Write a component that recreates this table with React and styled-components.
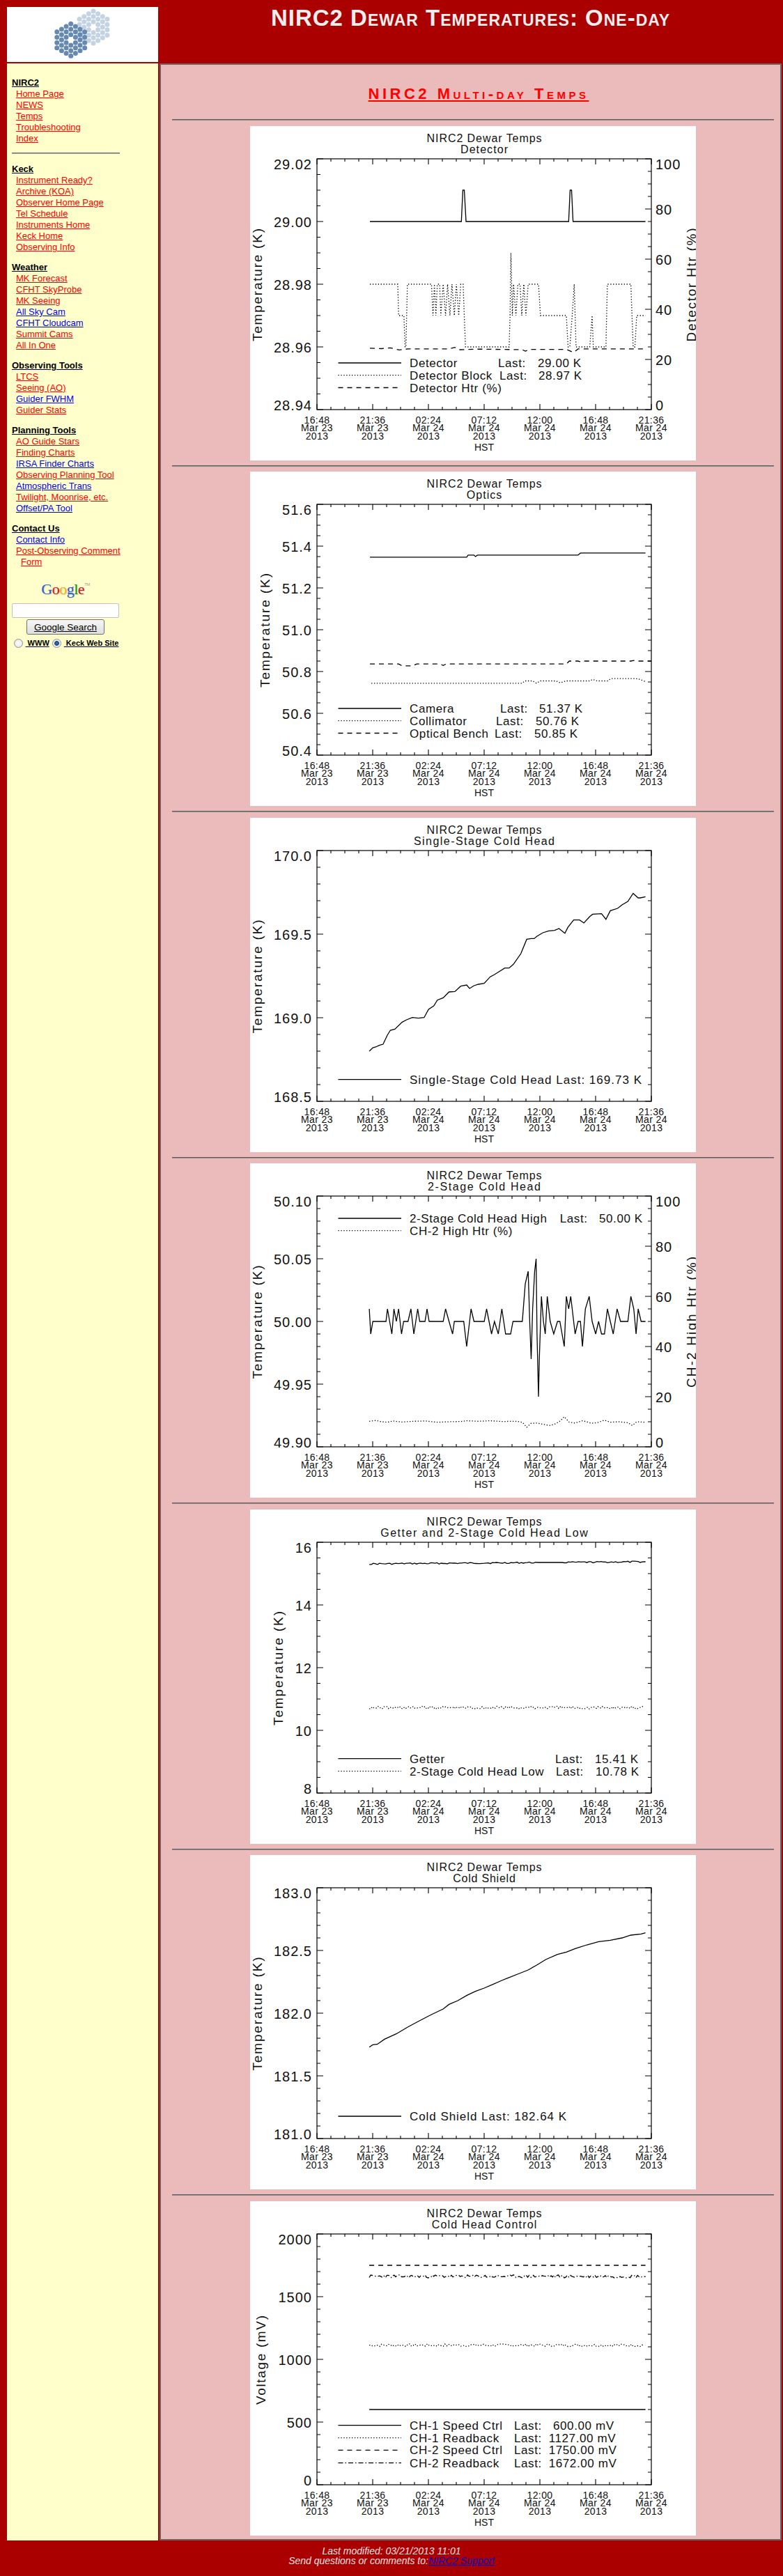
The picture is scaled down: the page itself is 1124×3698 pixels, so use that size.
import React from "react";
import styled, { createGlobalStyle } from "styled-components";

const GlobalStyle = createGlobalStyle`
  html, body { margin: 0; padding: 0; }
  body {
    background: #aa0000;
    font-family: "Liberation Sans", Arial, sans-serif;
  }
`;

const Page = styled.div`
  display: grid;
  grid-template-columns: 217px 893px;
  column-gap: 2px;
  row-gap: 2px;
  padding: 10px 0 0 10px;
`;

const LogoCell = styled.div`
  height: 79px;
  background: #ffffff;
  svg { display: block; }
`;

const TitleCell = styled.h1`
  margin: -3px 0 0;
  text-align: center;
  color: #eeeeee;
  font-size: 33px;
  line-height: 38px;
  font-weight: bold;
  font-variant: small-caps;
  letter-spacing: 1px;
`;

const Sidebar = styled.nav`
  background: #ffffcc;
  padding: 20px 3px 0 7px;
  font-size: 13px;
  line-height: 16px;
`;

const Group = styled.div`
  margin-top: ${(p) => p.$gap}px;
`;

const GroupHead = styled.a`
  display: block;
  color: #000000;
  font-weight: bold;
  text-decoration: underline;
`;

const NavLink = styled.a`
  display: block;
  padding-left: 13px;
  text-indent: -7px;
  color: ${(p) => (p.$blue ? "#0000ff" : "#ff0000")};
  text-decoration: underline;
`;

const SideRule = styled.div`
  width: 75%;
  height: 0;
  border-top: 1px solid #6e6e6e;
  border-bottom: 1px solid #a8a8a8;
  margin: 12px 0 14px;
`;

const SearchBox = styled.form`
  width: 154px;
  margin-top: 11px;
  display: flex;
  flex-direction: column;
  align-items: center;
`;

const GoogleMark = styled.div`
  font-family: "Liberation Serif", "Times New Roman", serif;
  font-size: 22px;
  line-height: 26px;
  letter-spacing: -0.5px;
  text-shadow: 1px 1px 1px rgba(0, 0, 0, 0.18);
  sup {
    font-family: "Liberation Sans", Arial, sans-serif;
    font-size: 6px;
    color: #999;
    vertical-align: 12px;
    text-shadow: none;
  }
`;

const Letter = styled.span`
  color: ${(p) => p.$c};
`;

const SearchInput = styled.input`
  box-sizing: border-box;
  width: 154px;
  height: 21px;
  margin: 7px 0 0;
  border: 1px solid #c2c2c2;
  border-radius: 2px;
  background: #ffffff;
`;

const SearchButton = styled.button`
  box-sizing: border-box;
  width: 112px;
  height: 22px;
  margin-top: 2px;
  padding: 0;
  border: 1px solid #707070;
  border-radius: 3px;
  background: linear-gradient(#f7f7f7, #dedede);
  font-family: "Liberation Sans", Arial, sans-serif;
  font-size: 13.5px;
  color: #000;
  text-decoration: underline;
`;

const RadioRow = styled.div`
  display: flex;
  align-items: center;
  height: 16px;
  margin-top: 4px;
  margin-left: 6px;
`;

const Radio = styled.input`
  appearance: none;
  margin: 0;
  width: 13px;
  height: 13px;
  border-radius: 50%;
  border: 1px solid #8f8f8f;
  background: radial-gradient(circle, #ffffff 0, #dedede 100%);
  &:checked {
    background: radial-gradient(circle, #3b74b8 0, #1a4a86 3px, #e8e8e8 3.8px, #ffffff 100%);
  }
`;

const RadioLabel = styled.span`
  margin: 0 4px 0 4px;
  font-size: 11px;
  font-weight: bold;
  white-space: pre;
  text-decoration: underline;
  color: #000;
`;

const Main = styled.main`
  background: #ebbaba;
  border: 2px solid #666666;
  padding: 0 9px 5.5px 16px;
`;

const Heading = styled.h2`
  margin: 29px 0 0;
  padding-left: 16px;
  text-align: center;
  font-size: 22px;
  line-height: 25px;
  font-weight: bold;
  font-variant: small-caps;
  letter-spacing: 4.5px;
  a {
    color: #ff0000;
    text-decoration: underline;
  }
`;

const Rule = styled.div`
  height: 0;
  border-top: 1px solid #5e5e5e;
  border-bottom: 1px solid #8c8c8c;
  margin: ${(p) => (p.$first ? 24 : 7)}px 0 7.5px;
`;

const ChartFrame = styled.div`
  width: 640px;
  height: 480px;
  margin: 0 auto;
  background: #ffffff;
  svg { display: block; }
`;

const ChartText = styled.text`
  font-family: "Liberation Sans", Arial, sans-serif;
  font-size: ${(p) => p.$size}px;
  letter-spacing: ${(p) => p.$ls || 0}px;
  fill: #111111;
`;

const Footer = styled.footer`
  padding: 8px 0 15px;
  text-align: center;
  color: #f4e2e2;
  font-style: italic;
  font-size: 14px;
  line-height: 14px;
  a { color: #0000cc; }
`;

/* ---------- logo ---------- */

function KeckLogo() {
  const s = 4.43;
  const cells = [];
  for (let q = -3; q <= 3; q++) {
    for (let r = -3; r <= 3; r++) {
      const d = Math.max(Math.abs(q), Math.abs(r), Math.abs(q + r));
      if (d === 0 || d > 3) continue;
      cells.push([1.5 * s * q, Math.sqrt(3) * s * (r + q / 2)]);
    }
  }
  return (
    <svg width="217" height="79" viewBox="0 0 217 79">
      {cells.map(([x, y], i) => (
        <circle key={"l" + i} cx={124 + x} cy={29 + y} r="3.5" fill="#c4d3e4" />
      ))}
      {cells.map(([x, y], i) => (
        <circle key={"d" + i} cx={91.7 + x} cy={47.3 + y} r="3.5" fill="#6689b2" />
      ))}
    </svg>
  );
}

/* ---------- plots ---------- */

const X0 = 96;
const X1 = 576;
const Y0 = 47;
const Y1 = 407;
const cx = (z) => z / 2.376 - 9;
const scale = (ax) => (v) => Y1 - ((v - ax.min) / (ax.max - ax.min)) * (Y1 - Y0);
const DASH = { solid: undefined, dot: "1.3 2.6", dash: "7 6", dashdot: "7 3 1.5 3" };

const XLABELS = [
  ["16:48", "Mar 23"],
  ["21:36", "Mar 23"],
  ["02:24", "Mar 24"],
  ["07:12", "Mar 24"],
  ["12:00", "Mar 24"],
  ["16:48", "Mar 24"],
  ["21:36", "Mar 24"],
];

function yTicks(ax) {
  const s = scale(ax);
  const n = Math.round((ax.max - ax.min) / ax.step);
  const major = [];
  const minor = [];
  for (let i = 0; i <= n; i++) {
    const v = ax.min + i * ax.step;
    major.push({ v, y: s(v) });
    if (i < n) {
      for (let j = 1; j < ax.minor; j++) minor.push(s(v + (j * ax.step) / ax.minor));
    }
  }
  return { major, minor };
}

const labelBase = (y) => Math.min(Math.max(y + 1, Y0 + 7.5), Y1 - 6.5) + 7;

function Plot({ sub, subW, left, right, ytitle, tx, tw, rtitle, rw, series, legend, yoff = 0 }) {
  const ls = scale(left);
  const rs = right ? scale(right) : null;
  const lt = yTicks(left);
  const rt = right ? yTicks(right) : lt;

  let ticks = "";
  for (let k = 0; k <= 24; k++) {
    const x = X0 + k * 20;
    const len = k % 4 === 0 ? 8 : 4;
    ticks += `M${x} ${Y1}v${-len}M${x} ${Y0}v${len}`;
  }
  lt.major.forEach((t) => (ticks += `M${X0} ${t.y}h9`));
  lt.minor.forEach((y) => (ticks += `M${X0} ${y}h5`));
  rt.major.forEach((t) => (ticks += `M${X1} ${t.y}h-9`));
  rt.minor.forEach((y) => (ticks += `M${X1} ${y}h-5`));

  const pts = (s) =>
    s.pts
      .map((p) => {
        const x = cx(p[0]);
        const y = s.px ? p[1] / 3 + yoff : (s.right ? rs : ls)(p[1]);
        return `${x.toFixed(1)},${y.toFixed(1)}`;
      })
      .join(" ");

  return (
    <svg width="640" height="480" viewBox="0 0 640 480">
      <ChartText $size={16} x="336" y="23" textAnchor="middle" textLength="165" lengthAdjust="spacing">
        NIRC2 Dewar Temps
      </ChartText>
      <ChartText $size={16} x="336" y="38.5" textAnchor="middle" textLength={subW} lengthAdjust="spacing">
        {sub}
      </ChartText>

      <rect x={X0} y={Y0} width={X1 - X0} height={Y1 - Y0} fill="none" stroke="#000" strokeWidth="1.2" />
      <path d={ticks} stroke="#000" strokeWidth="1.1" fill="none" />

      {lt.major.map((t) => (
        <ChartText key={"ly" + t.v} $size={20} $ls={1} x="89" y={labelBase(t.y)} textAnchor="end">
          {t.v.toFixed(left.dec)}
        </ChartText>
      ))}
      {right &&
        rt.major.map((t) => (
          <ChartText key={"ry" + t.v} $size={20} $ls={1} x="582" y={labelBase(t.y)}>
            {t.v.toFixed(right.dec)}
          </ChartText>
        ))}

      <ChartText
        $size={19}
        x="0"
        y="0"
        textAnchor="middle"
        textLength={tw}
        lengthAdjust="spacing"
        transform={`translate(${tx} 228) rotate(-90)`}
      >
        {ytitle}
      </ChartText>
      {rtitle && (
        <ChartText
          $size={19}
          x="0"
          y="0"
          textAnchor="middle"
          textLength={rw}
          lengthAdjust="spacing"
          transform="translate(640 228) rotate(-90)"
        >
          {rtitle}
        </ChartText>
      )}

      {XLABELS.map(([t, d], k) => (
        <g key={"xl" + k}>
          <ChartText $size={14} $ls={0.4} x={X0 + k * 80} y="426.5" textAnchor="middle">{t}</ChartText>
          <ChartText $size={14} $ls={0.4} x={X0 + k * 80} y="438.2" textAnchor="middle">{d}</ChartText>
          <ChartText $size={14} $ls={0.4} x={X0 + k * 80} y="450" textAnchor="middle">2013</ChartText>
        </g>
      ))}
      <ChartText $size={14} x="336" y="466" textAnchor="middle">HST</ChartText>

      {series.map((s, i) => (
        <polyline
          key={"s" + i}
          points={pts(s)}
          fill="none"
          stroke="#000"
          strokeWidth={s.style === "solid" ? 1.3 : 1.3}
          strokeDasharray={DASH[s.style]}
        />
      ))}

      {legend.map((row, i) => (
        <g key={"lg" + i}>
          <line
            x1="126.5"
            x2="217"
            y1={row.y - 6}
            y2={row.y - 6}
            stroke="#000"
            strokeWidth="1.3"
            strokeDasharray={DASH[row.style]}
          />
          {row.cells.map(([x, text, w]) => (
            <ChartText
              key={x}
              $size={17}
              $ls={w ? 0 : 0.6}
              x={x}
              y={row.y}
              textLength={w}
              lengthAdjust={w ? "spacing" : undefined}
            >
              {text}
            </ChartText>
          ))}
        </g>
      ))}
    </svg>
  );
}

/* ---------- data ---------- */

const rng = (seed) => () => {
  seed = (seed * 9301 + 49297) % 233280;
  return seed / 233280;
};

function noisy(from, to, step, base, amp, seed, fn) {
  const r = rng(seed);
  const out = [];
  for (let z = from; z <= to; z += step) {
    const t = (z - from) / (to - from);
    out.push([z, (fn ? fn(z, t) : base) + (r() - 0.5) * amp]);
  }
  out.push([to, fn ? fn(to, 1) : base]);
  return out;
}

const detBlock = [
  [430, 28.98], [525, 28.98], [528, 28.97], [546, 28.97], [550, 28.96], [553, 28.96], [558, 28.98], [640, 28.98],
  [645, 28.97], [650, 28.98], [655, 28.97], [660, 28.98], [668, 28.98], [672, 28.97], [680, 28.98], [688, 28.97],
  [695, 28.98], [703, 28.97], [710, 28.98], [718, 28.97], [725, 28.98], [733, 28.97], [740, 28.98], [748, 28.98],
  [752, 28.97], [756, 28.96], [905, 28.96], [908, 28.97], [911, 28.99], [916, 28.97], [920, 28.98], [928, 28.97],
  [935, 28.98], [942, 28.98], [948, 28.97], [955, 28.98], [962, 28.97], [970, 28.98], [1005, 28.98], [1012, 28.97],
  [1100, 28.97], [1106, 28.96], [1112, 28.96], [1120, 28.97], [1127, 28.98], [1133, 28.96], [1180, 28.96],
  [1188, 28.97], [1192, 28.96], [1235, 28.96], [1240, 28.98], [1320, 28.98], [1328, 28.96], [1334, 28.96],
  [1340, 28.97], [1370, 28.97],
];

const coldHead2 = [
  [428, 50.01], [433, 49.99], [440, 50.0], [485, 50.0], [490, 50.01], [505, 49.99], [512, 50.01], [520, 50.0],
  [528, 50.01], [538, 49.99], [545, 50.0], [560, 50.0], [570, 50.01], [580, 49.99], [593, 50.01], [600, 50.0],
  [618, 50.0], [625, 50.01], [632, 50.0], [680, 50.0], [688, 50.01], [700, 50.0], [712, 49.99], [718, 50.0],
  [750, 50.0], [760, 49.98], [775, 50.01], [785, 50.0], [820, 50.0], [828, 50.01], [845, 49.99], [855, 50.0],
  [868, 49.99], [880, 50.01], [893, 49.99], [910, 49.99], [918, 50.0], [950, 50.0], [960, 50.03], [970, 50.04],
  [975, 50.0], [980, 49.97], [985, 50.01], [992, 50.04], [997, 50.05], [1000, 49.99], [1005, 49.94],
  [1008, 49.97], [1015, 50.02], [1022, 50.0], [1028, 49.99], [1035, 50.02], [1045, 50.0], [1057, 49.99],
  [1070, 50.0], [1078, 50.0], [1093, 49.98], [1100, 50.02], [1108, 50.01], [1115, 50.02], [1130, 49.99],
  [1140, 50.0], [1148, 50.0], [1155, 49.98], [1165, 50.01], [1178, 50.02], [1188, 50.0], [1200, 49.99],
  [1210, 50.0], [1220, 49.99], [1230, 49.99], [1240, 50.01], [1250, 50.0], [1260, 49.99], [1273, 50.01],
  [1285, 50.0], [1310, 50.0], [1320, 50.02], [1330, 50.01], [1338, 49.99], [1345, 50.01], [1355, 50.0],
  [1370, 50.0],
];

const ch2Htr = [
  [428, 10.2], [450, 10.5], [470, 10], [490, 9.8], [510, 10.3], [540, 9.9], [580, 10.2], [620, 10.3], [660, 9.8],
  [700, 10], [740, 10.1], [760, 10.4], [800, 10.2], [840, 10.4], [880, 10.1], [930, 10.2], [950, 9.8], [965, 7.8],
  [980, 9.4], [1000, 9.5], [1020, 9], [1045, 8.5], [1065, 9.3], [1080, 10.4], [1093, 12], [1110, 9.8],
  [1130, 9.5], [1155, 10.4], [1170, 10], [1185, 9.4], [1205, 9.6], [1230, 10.6], [1250, 9.8], [1280, 10],
  [1310, 9.6], [1325, 8.5], [1340, 10], [1370, 9.8],
];

const singleStage = [
  [428, 1030], [440, 1015], [450, 1012], [462, 1005], [475, 1000], [490, 960], [500, 940], [515, 935], [540, 905],
  [555, 895], [575, 885], [595, 888], [615, 885], [630, 850], [648, 835], [660, 810], [680, 800], [700, 775],
  [720, 773], [740, 750], [760, 745], [770, 760], [785, 748], [800, 742], [820, 738], [840, 710], [855, 700],
  [870, 688], [890, 672], [905, 672], [920, 655], [945, 610], [965, 548], [980, 545], [990, 545], [1000, 535],
  [1020, 520], [1040, 512], [1060, 510], [1075, 502], [1095, 522], [1105, 497], [1125, 465], [1145, 465],
  [1160, 478], [1180, 450], [1190, 440], [1220, 438], [1235, 462], [1250, 425], [1275, 415], [1290, 400],
  [1310, 385], [1328, 350], [1345, 370], [1352, 370], [1370, 365],
];

const coldShield = [
  [428, 852], [440, 842], [455, 840], [480, 818], [520, 795], [560, 765], [600, 738], [640, 712], [680, 688],
  [700, 668], [730, 652], [760, 630], [790, 612], [820, 598], [850, 582], [880, 565], [900, 555], [940, 535],
  [970, 520], [1000, 498], [1030, 475], [1070, 453], [1100, 443], [1130, 428], [1170, 412], [1210, 398],
  [1250, 392], [1290, 382], [1320, 370], [1355, 365], [1370, 360],
];

const getter = noisy(428, 1370, 7, 0, 6, 17, (z, t) => (z > 1000 && z < 1090 ? 253 : 259 - 9 * t)).map(
  ([z, v]) => (z > 1000 && z < 1090 ? [z, 253] : [z, v])
);
const lowHead = noisy(428, 1365, 5, 878, 12, 41);

const CHARTS = [
  {
    sub: "Detector",
    subW: 68,
    left: { min: 28.94, max: 29.02, step: 0.02, minor: 4, dec: 2 },
    right: { min: 0, max: 100, step: 20, minor: 4, dec: 0 },
    ytitle: "Temperature (K)",
    tx: 16.5,
    tw: 162,
    rtitle: "Detector Htr (%)",
    rw: 163,
    series: [
      {
        style: "solid",
        pts: [[430, 29.0], [742, 29.0], [747, 29.01], [752, 29.01], [758, 29.0], [1108, 29.0], [1113, 29.01], [1118, 29.01], [1123, 29.0], [1370, 29.0]],
      },
      { style: "dot", pts: detBlock },
      {
        style: "dash",
        right: true,
        pts: [[430, 24.5], [470, 24.3], [500, 24.6], [530, 23.8], [560, 24.2], [700, 24.2], [720, 24.8], [735, 23.9], [800, 24.1], [950, 23.9], [960, 23.3], [975, 24.0], [1100, 24.0], [1125, 22.8], [1140, 24.2], [1370, 24.2]],
      },
    ],
    legend: [
      { y: 346, style: "solid", cells: [[229, "Detector"], [356, "Last:"], [413, "29.00 K"]] },
      { y: 363.7, style: "dot", cells: [[229, "Detector Block"], [358, "Last:"], [414, "28.97 K"]] },
      { y: 381.5, style: "dash", cells: [[229, "Detector Htr (%)"]] },
    ],
  },
  {
    sub: "Optics",
    subW: 50.5,
    left: { min: 50.4, max: 51.6, step: 0.2, minor: 4, dec: 1 },
    ytitle: "Temperature (K)",
    tx: 28,
    tw: 164,
    series: [
      {
        style: "solid",
        pts: [[430, 51.347], [760, 51.347], [765, 51.357], [785, 51.357], [790, 51.35], [797, 51.357], [1140, 51.357], [1148, 51.367], [1370, 51.367]],
      },
      {
        style: "dot",
        pts: [[435, 50.744], [950, 50.744], [958, 50.755], [985, 50.755], [998, 50.744], [1012, 50.755], [1065, 50.755], [1080, 50.746], [1098, 50.755], [1180, 50.755], [1190, 50.762], [1205, 50.755], [1240, 50.755], [1252, 50.766], [1330, 50.766], [1345, 50.765], [1370, 50.752]],
      },
      {
        style: "dash",
        pts: [[430, 50.836], [528, 50.836], [540, 50.827], [575, 50.827], [590, 50.836], [670, 50.836], [680, 50.829], [690, 50.836], [1100, 50.836], [1110, 50.85], [1140, 50.85], [1150, 50.846], [1160, 50.85], [1320, 50.85], [1330, 50.853], [1340, 50.85], [1390, 50.85]],
      },
    ],
    legend: [
      { y: 346, style: "solid", cells: [[229, "Camera"], [359, "Last:"], [415, "51.37 K"]] },
      { y: 363.7, style: "dot", cells: [[229, "Collimator"], [353, "Last:"], [410, "50.76 K"]] },
      { y: 381.5, style: "dash", cells: [[229, "Optical Bench"], [351, "Last:"], [408, "50.85 K"]] },
    ],
  },
  {
    sub: "Single-Stage Cold Head",
    subW: 202,
    left: { min: 168.5, max: 170.0, step: 0.5, minor: 5, dec: 1 },
    ytitle: "Temperature (K)",
    tx: 16.5,
    tw: 163,
    yoff: -8.3,
    series: [{ style: "solid", px: true, pts: singleStage }],
    legend: [{ y: 381.7, style: "solid", cells: [[229, "Single-Stage Cold Head Last: 169.73 K", 333]] }],
  },
  {
    sub: "2-Stage Cold Head",
    subW: 162,
    left: { min: 49.9, max: 50.1, step: 0.05, minor: 5, dec: 2 },
    right: { min: 0, max: 100, step: 20, minor: 4, dec: 0 },
    ytitle: "Temperature (K)",
    tx: 16.5,
    tw: 163,
    rtitle: "CH-2 High Htr (%)",
    rw: 188,
    series: [
      { style: "solid", pts: coldHead2 },
      { style: "dot", right: true, pts: ch2Htr },
    ],
    legend: [
      { y: 85, style: "solid", cells: [[229, "2-Stage Cold Head High"], [444.7, "Last:"], [501, "50.00 K"]] },
      { y: 102.7, style: "dot", cells: [[229, "CH-2 High Htr (%)"]] },
    ],
  },
  {
    sub: "Getter and 2-Stage Cold Head Low",
    subW: 297.6,
    left: { min: 8, max: 16, step: 2, minor: 4, dec: 0 },
    ytitle: "Temperature (K)",
    tx: 47,
    tw: 164,
    yoff: -8.3,
    series: [
      { style: "solid", px: true, pts: getter },
      { style: "dot", px: true, pts: lowHead },
    ],
    legend: [
      { y: 363.7, style: "solid", cells: [[229, "Getter"], [438, "Last:"], [495, "15.41 K"]] },
      { y: 381.7, style: "dot", cells: [[229, "2-Stage Cold Head Low"], [439, "Last:"], [496, "10.78 K"]] },
    ],
  },
  {
    sub: "Cold Shield",
    subW: 89.6,
    left: { min: 181, max: 183, step: 0.5, minor: 5, dec: 1 },
    ytitle: "Temperature (K)",
    tx: 16.5,
    tw: 163,
    yoff: -8.3,
    series: [{ style: "solid", px: true, pts: coldShield }],
    legend: [{ y: 381, style: "solid", cells: [[229, "Cold Shield Last: 182.64 K", 225]] }],
  },
  {
    sub: "Cold Head Control",
    subW: 150.7,
    left: { min: 0, max: 2000, step: 500, minor: 5, dec: 0 },
    ytitle: "Voltage (mV)",
    tx: 21.5,
    tw: 128,
    series: [
      { style: "solid", pts: [[428, 600], [1370, 600]] },
      { style: "dot", pts: noisy(428, 1365, 6, 1113, 22, 7) },
      { style: "dash", pts: [[428, 1750], [1370, 1750]] },
      { style: "dashdot", pts: noisy(428, 1370, 5, 1662, 24, 23) },
    ],
    legend: [
      { y: 327.7, style: "solid", cells: [[229, "CH-1 Speed Ctrl"], [379, "Last:"], [435, "600.00 mV"]] },
      { y: 345.7, style: "dot", cells: [[229, "CH-1 Readback"], [379, "Last:"], [428.7, "1127.00 mV"]] },
      { y: 363.3, style: "dash", cells: [[229, "CH-2 Speed Ctrl"], [379, "Last:"], [428.7, "1750.00 mV"]] },
      { y: 381.7, style: "dashdot", cells: [[229, "CH-2 Readback"], [379, "Last:"], [428.7, "1672.00 mV"]] },
    ],
  },
];

/* ---------- sidebar ---------- */

const NAV = [
  { head: "NIRC2", links: ["Home Page", "NEWS", "Temps", "Troubleshooting", "Index"] },
  {
    head: "Keck",
    links: ["Instrument Ready?", "Archive (KOA)", "Observer Home Page", "Tel Schedule", "Instruments Home", "Keck Home", "Observing Info"],
  },
  {
    head: "Weather",
    links: ["MK Forecast", "CFHT SkyProbe", "MK Seeing", ["All Sky Cam"], ["CFHT Cloudcam"], "Summit Cams", "All In One"],
  },
  { head: "Observing Tools", links: ["LTCS", "Seeing (AO)", ["Guider FWHM"], "Guider Stats"] },
  {
    head: "Planning Tools",
    links: ["AO Guide Stars", "Finding Charts", ["IRSA Finder Charts"], "Observing Planning Tool", ["Atmospheric Trans"], "Twilight, Moonrise, etc.", ["Offset/PA Tool"]],
  },
  { head: "Contact Us", links: [["Contact Info"], "Post-Observing Comment|Form"] },
];

const GOOGLE = [
  ["G", "#2a5bd7"],
  ["o", "#d50f25"],
  ["o", "#eeb211"],
  ["g", "#2a5bd7"],
  ["l", "#009925"],
  ["e", "#d50f25"],
];

function SideNav() {
  return (
    <Sidebar>
      {NAV.map((g, i) => (
        <React.Fragment key={g.head}>
          <Group $gap={i === 0 || i === 1 ? 0 : 13}>
            <GroupHead href="#">{g.head}</GroupHead>
            {g.links.map((l) => {
              const blue = Array.isArray(l);
              const text = blue ? l[0] : l;
              const parts = text.split("|");
              return (
                <NavLink key={text} href="#" $blue={blue}>
                  {parts[0]}
                  {parts[1] && (
                    <>
                      <br />
                      {parts[1]}
                    </>
                  )}
                </NavLink>
              );
            })}
          </Group>
          {i === 0 && <SideRule />}
        </React.Fragment>
      ))}
      <SearchBox onSubmit={(e) => e.preventDefault()}>
        <GoogleMark>
          {GOOGLE.map(([ch, c], i) => (
            <Letter key={i} $c={c}>
              {ch}
            </Letter>
          ))}
          <sup>TM</sup>
        </GoogleMark>
        <SearchInput type="text" />
        <SearchButton type="submit">Google Search</SearchButton>
        <RadioRow>
          <Radio type="radio" name="site" />
          <RadioLabel> WWW</RadioLabel>
          <Radio type="radio" name="site" defaultChecked />
          <RadioLabel> Keck Web Site</RadioLabel>
        </RadioRow>
      </SearchBox>
    </Sidebar>
  );
}

export default function App() {
  return (
    <>
      <GlobalStyle />
      <Page>
        <LogoCell>
          <KeckLogo />
        </LogoCell>
        <TitleCell>NIRC2 Dewar Temperatures: One-day</TitleCell>
        <SideNav />
        <Main>
          <Heading>
            <a href="#">NIRC2 Multi-day Temps</a>
          </Heading>
          <Rule $first />
          {CHARTS.map((c, i) => (
            <React.Fragment key={c.sub}>
              <ChartFrame>
                <Plot {...c} />
              </ChartFrame>
              {i < CHARTS.length - 1 && <Rule />}
            </React.Fragment>
          ))}
        </Main>
      </Page>
      <Footer>
        Last modified: 03/21/2013 11:01
        <br />
        Send questions or comments to:<a href="#">NIRC2 Support</a>
      </Footer>
    </>
  );
}
